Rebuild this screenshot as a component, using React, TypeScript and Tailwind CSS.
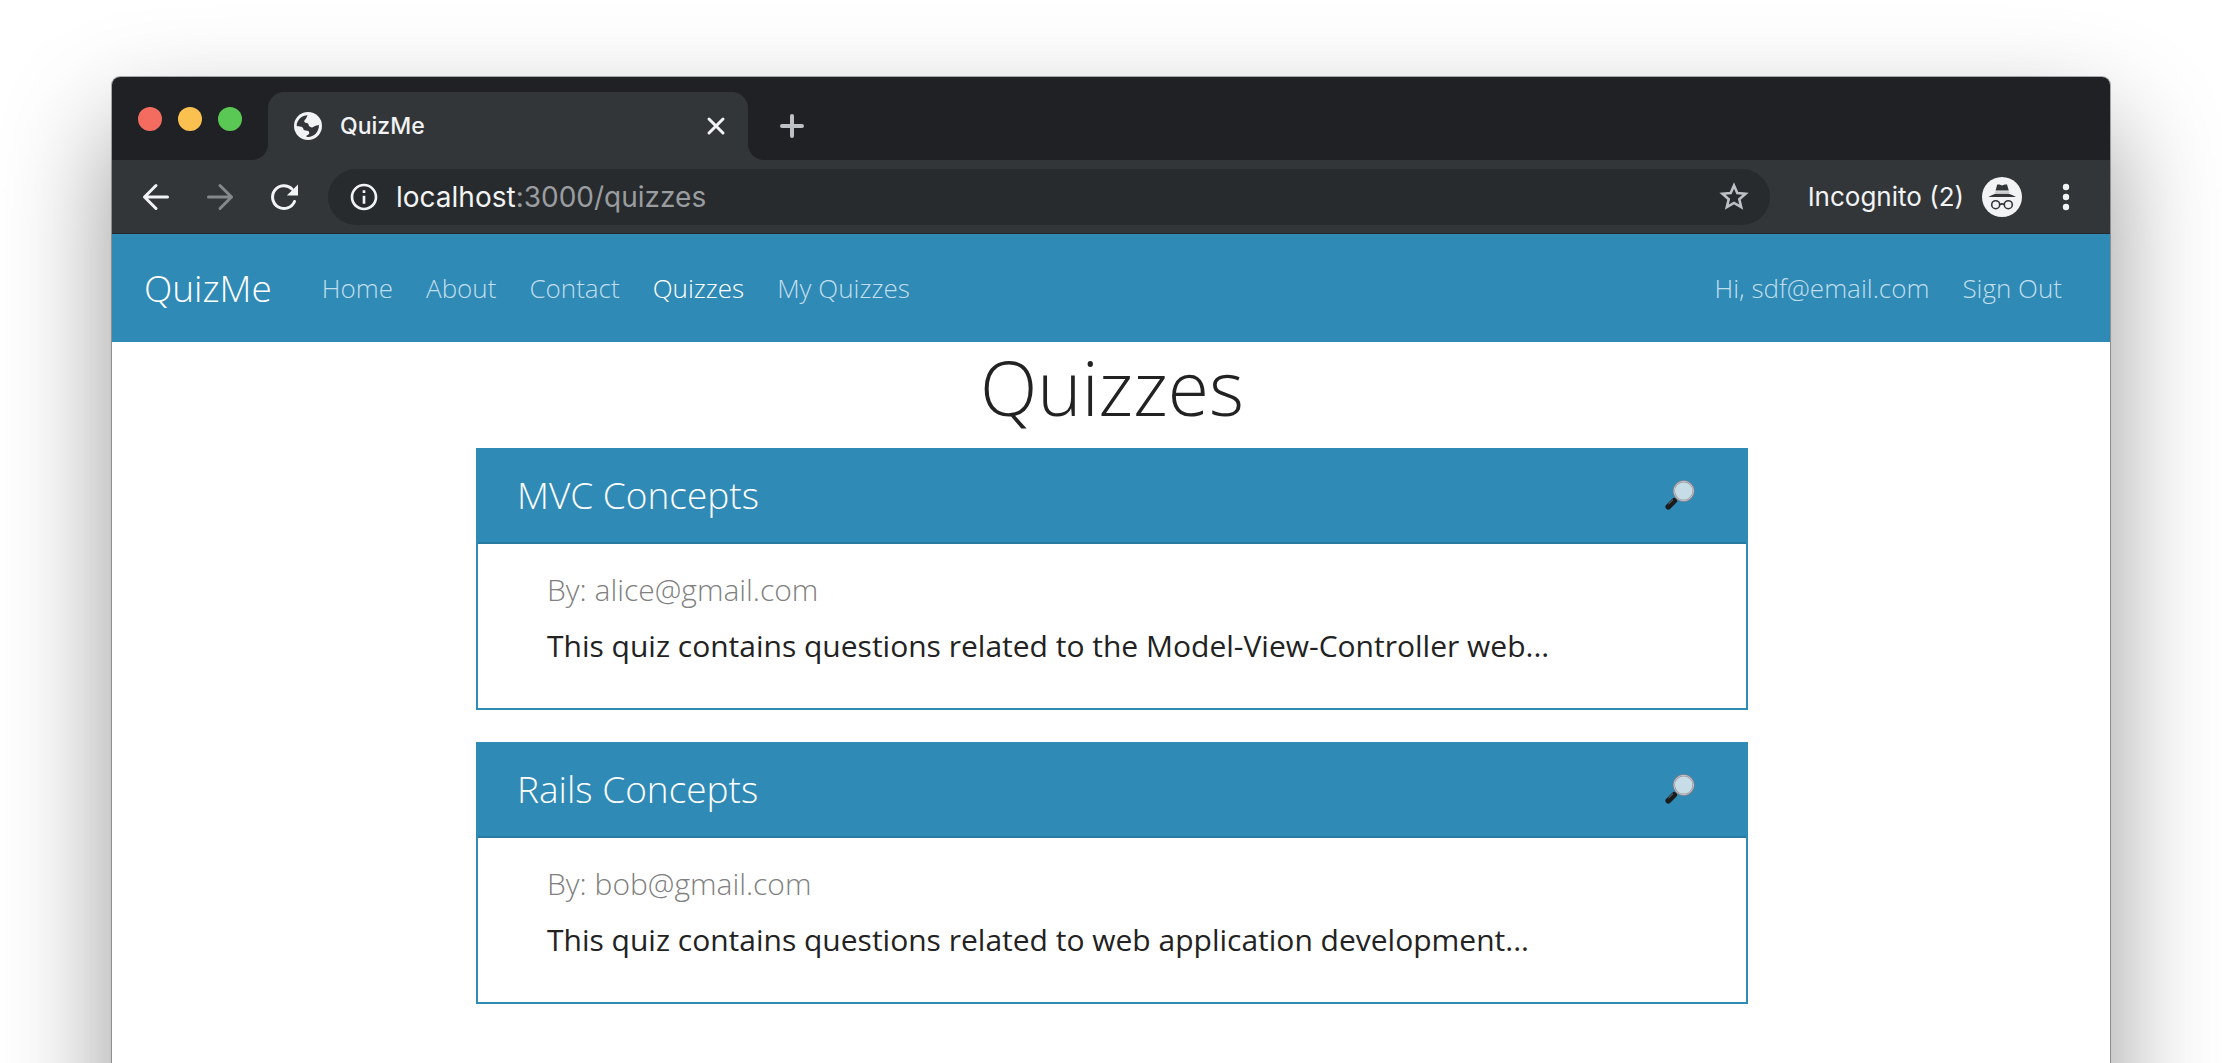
import type { ReactNode } from "react";
import { MdInfoOutline } from "react-icons/md";

const navLinks = ["Home", "About", "Contact", "Quizzes", "My Quizzes"];

const quizzes = [
  {
    title: "MVC Concepts",
    author: "alice@gmail.com",
    description: "This quiz contains questions related to the Model-View-Controller web...",
  },
  {
    title: "Rails Concepts",
    author: "bob@gmail.com",
    description: "This quiz contains questions related to web application development...",
  },
];

function LineIcon({ children, width = 3 }: { children: ReactNode; width?: number }) {
  return (
    <svg
      viewBox="0 0 32 32"
      className="size-8"
      fill="none"
      stroke="currentColor"
      strokeWidth={width}
      strokeLinecap="round"
      strokeLinejoin="round"
      aria-hidden="true"
    >
      {children}
    </svg>
  );
}

function TabFoot({ flip = false }: { flip?: boolean }) {
  return (
    <svg viewBox="0 0 16 16" className={flip ? "size-4 -scale-x-100" : "size-4"} aria-hidden="true">
      <path d="M16 0v16H0A16 16 0 0 0 16 0Z" fill="#333639" />
    </svg>
  );
}

function GlobeIcon() {
  return (
    <svg viewBox="12 12 84 84" className="size-7" aria-hidden="true">
      <circle cx="54" cy="54" r="42" fill="#f1f3f4" />
      <path
        d="M20 54C20 36 36 22 53 22C50 26 50 30 47 33C42 36 41 42 46 44C54 45 56 46 56 52C60 60 70 60 74 54L87 51C87 72 72 87 54 87C51 87 49 86 49 83C58 80 60 76 56 70C50 66 44 68 41 66C40 58 36 55 20 54Z"
        fill="#333639"
      />
    </svg>
  );
}

function StarIcon() {
  return (
    <svg viewBox="0 0 32 32" className="size-8" aria-hidden="true">
      <path
        d="M16 4.500 19.300 12 27.500 12.800 21.300 18.200 23.200 26.200 16 22 8.800 26.200 10.700 18.200 4.500 12.800 12.700 12Z"
        fill="none"
        stroke="#bdc1c6"
        strokeWidth="2.600"
      />
    </svg>
  );
}

function IncognitoIcon() {
  return (
    <svg viewBox="0 0 40 40" className="size-10" aria-hidden="true">
      <circle cx="20" cy="20" r="20" fill="#f1f3f4" />
      <path d="M15.200 7.600h2.200l2.700.9 2.700-.9h2.200l1.800 5.900H13.600Z" fill="#333639" />
      <path d="M13.200 14.200h13.800l.6 1.900H12.600Z" fill="#c9cbcd" />
      <path d="M6.500 20c3-1.700 6-3.200 7.500-3.200h12c1.500 0 5 1.500 8 3.200Z" fill="#333639" />
      <g fill="none" stroke="#333639" strokeWidth="1.600">
        <circle cx="13.700" cy="27.700" r="4" />
        <circle cx="26.300" cy="27.700" r="4" />
        <path d="M17.700 27.400q2.300-1 4.600 0" />
      </g>
    </svg>
  );
}

function Magnifier() {
  return (
    <svg viewBox="0 0 30 30" className="size-[30px]" aria-hidden="true">
      <path d="M9.500 20.500 13 17" stroke="#a3a3aa" strokeWidth="2.500" />
      <path d="M3.300 26.700 9.300 20.700" stroke="#1b1c1e" strokeWidth="5.600" strokeLinecap="round" />
      <path d="M3.500 24 8 19.700" stroke="#77777c" strokeWidth="1" />
      <circle cx="18.700" cy="11" r="9.800" fill="#c6dde8" stroke="#85828c" strokeWidth="2" />
      <circle cx="18.700" cy="11" r="9.700" fill="none" stroke="#dcd8dd" strokeWidth="0.800" />
    </svg>
  );
}

function TabStrip() {
  return (
    <div className="flex h-[83px] items-end bg-[#202124] pl-[26px]">
      <div className="flex h-[83px] w-[114px] items-center gap-4">
        <button aria-label="Close window" className="size-6 rounded-full bg-[#f46c60]" />
        <button aria-label="Minimize window" className="size-6 rounded-full bg-[#fbc150]" />
        <button aria-label="Zoom window" className="size-6 rounded-full bg-[#5ac855]" />
      </div>
      <TabFoot />
      <div className="flex h-[68px] w-[480px] items-center rounded-t-2xl bg-[#333639] pr-4 pl-[26px] text-[#f1f3f4]">
        <GlobeIcon />
        <span className="ml-[18px] grow text-[23px] font-medium">QuizMe</span>
        <button aria-label="Close tab">
          <LineIcon>
            <path d="M9 9 23 23M23 9 9 23" />
          </LineIcon>
        </button>
      </div>
      <TabFoot flip />
      <button aria-label="New tab" className="mb-[18px] ml-3 text-[#bdc1c6]">
        <LineIcon width={4}>
          <path d="M16 6v20M6 16h20" />
        </LineIcon>
      </button>
    </div>
  );
}

function Toolbar() {
  return (
    <div className="flex h-[74px] items-center border-b border-[#25282a] bg-[#333639] pr-6 pl-7 text-[#f1f3f4]">
      <div className="flex gap-8">
        <button aria-label="Back">
          <LineIcon><path d="M27.500 16H4.500M16 4.500 4.500 16 16 27.500" /></LineIcon>
        </button>
        <button aria-label="Forward" className="text-[#85888a]">
          <LineIcon><path d="M4.500 16H27.500M16 4.500 27.500 16 16 27.500" /></LineIcon>
        </button>
        <button aria-label="Reload">
          <LineIcon>
            <path d="M26.500 20.500A11.400 11.400 0 1 1 24 8" />
            <path d="M30 3.500V14.500H18.800Z" fill="currentColor" stroke="none" />
          </LineIcon>
        </button>
      </div>
      <div className="ml-7 flex h-14 grow items-center rounded-full bg-[#282b2e] px-5">
        <MdInfoOutline className="size-8" aria-hidden="true" />
        <span className="ml-4 grow text-[28px] text-[#9a9da0]">
          <span className="text-[#f1f3f4]">localhost</span>:3000/quizzes
        </span>
        <button aria-label="Bookmark this page"><StarIcon /></button>
      </div>
      <span className="ml-[38px] text-[26px]">Incognito (2)</span>
      <button aria-label="Profile" className="mr-6 ml-[18px]"><IncognitoIcon /></button>
      <button aria-label="Menu">
        <svg viewBox="0 0 40 40" className="size-10" fill="currentColor" aria-hidden="true">
          <circle cx="20" cy="10" r="3.200" />
          <circle cx="20" cy="20" r="3.200" />
          <circle cx="20" cy="30" r="3.200" />
        </svg>
      </button>
    </div>
  );
}

function SiteNav() {
  return (
    <nav className="flex h-[108px] items-center bg-[#2f8ab6] pr-12 pl-8 font-['Open_Sans',sans-serif] text-[26px] font-light text-[#c0deec]">
      <a href="#" className="mr-[50px] text-[37px] text-white">QuizMe</a>
      <div className="flex grow gap-[33px]">
        {navLinks.map((label) => (
          <a key={label} href="#" className={label === "Quizzes" ? "text-white" : ""}>
            {label}
          </a>
        ))}
      </div>
      <div className="flex gap-[33px]">
        <a href="#">Hi, sdf@email.com</a>
        <a href="#">Sign Out</a>
      </div>
    </nav>
  );
}

export default function App() {
  return (
    <div className="flex min-h-screen flex-col overflow-hidden bg-white px-28 pt-[77px]">
      <div className="-mb-40 flex grow flex-col overflow-hidden rounded-lg bg-white pb-40 font-[Inter,sans-serif] shadow-[0_0_0_1px_rgba(0,0,0,0.3),0_50px_110px_rgba(0,0,0,0.42)]">
        <TabStrip />
        <Toolbar />
        <SiteNav />
        <main className="flex flex-col items-center gap-8 pr-8 pl-[34px] font-['Open_Sans',sans-serif] text-[#222222]">
          <h1 className="-mb-4 text-[75px] leading-[90px] font-light">Quizzes</h1>
          {quizzes.map((quiz) => (
            <article key={quiz.title} className="w-[1272px] max-w-full border-2 border-[#2f8ab6]">
              <header className="flex h-[94px] items-center justify-between border-b-2 border-[#297a9f] bg-[#2f8ab6] pr-[51px] pb-0.5 pl-[39px] text-white">
                <h2 className="text-[37px] font-light">{quiz.title}</h2>
                <a href="#" aria-label={"View " + quiz.title}><Magnifier /></a>
              </header>
              <div className="h-[164px] px-[69px] pt-[18px] text-[30px] leading-14">
                <p className="font-light text-[#808080]">By: {quiz.author}</p>
                <p>{quiz.description}</p>
              </div>
            </article>
          ))}
        </main>
      </div>
    </div>
  );
}
